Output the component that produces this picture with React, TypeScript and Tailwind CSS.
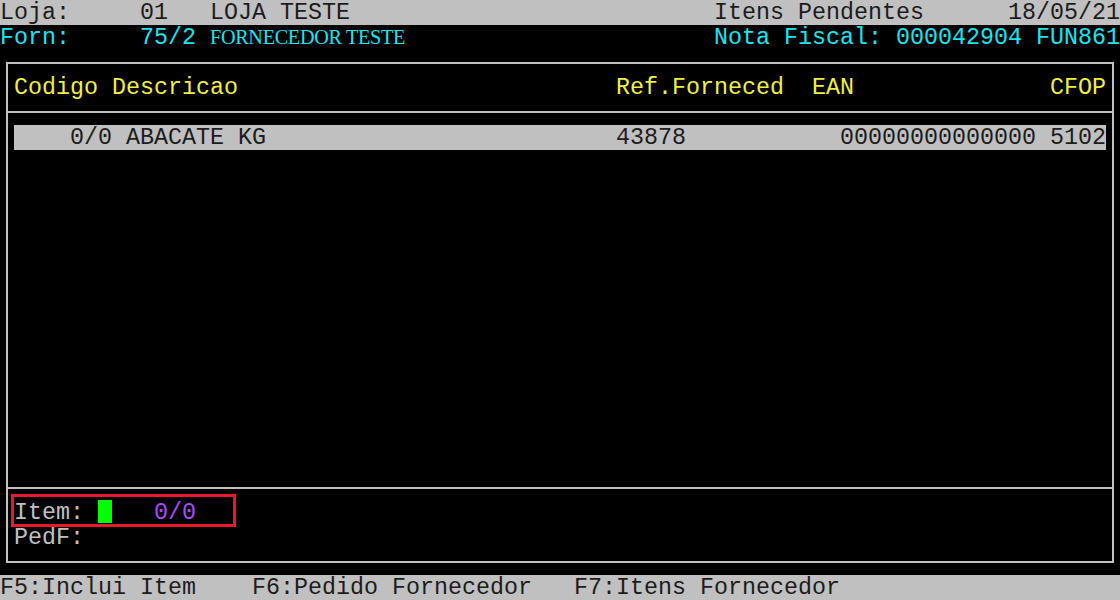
import React from "react";

const mono = "font-['Liberation_Mono','Courier_New',monospace] text-[23.33px] leading-[27px] whitespace-pre";

export default function App() {
  return (
    <div className={`relative w-[1120px] h-[600px] bg-black overflow-hidden ${mono}`}>
      {/* top bar */}
      <div className="flex h-[25px] bg-[#c0c0c0] text-[#1c1c1c]">
        <span>{"Loja:     01   LOJA TESTE"}</span>
        <span className="ml-auto">{"Itens Pendentes      18/05/21"}</span>
      </div>
      <div className="flex h-[25px] text-[#19e6f0]">
        <span>{"Forn:     75/2 "}</span>
        <span className="font-['Liberation_Serif','Times_New_Roman',serif] text-[20.2px] leading-[25px] tracking-[-0.3px]">
          FORNECEDOR TESTE
        </span>
        <span className="ml-auto">{"Nota Fiscal: 000042904 FUN861"}</span>
      </div>

      {/* frame */}
      <div className="mt-[12px] ml-[6px] w-[1108px] h-[501px] border-2 border-[#c0c0c0] flex flex-col">
        <div className="flex pl-[6px] pr-[6px] pt-[11px] h-[49px] border-b-2 border-[#c0c0c0] text-[#f0f040]">
          <span className="h-[25px]">{"Codigo Descricao"}</span>
          <span className="ml-auto h-[25px]">{"Ref.Forneced  EAN              CFOP"}</span>
        </div>
        <div className="h-[376px] border-b-2 border-[#c0c0c0] pt-[12px] pl-[6px] pr-[6px]">
          <div className="flex h-[25px] bg-[#c0c0c0] text-[#1c1c1c]">
            <span>{"    0/0 ABACATE KG"}</span>
            <span className="ml-auto">{"43878           00000000000000 5102"}</span>
          </div>
        </div>
        <div className="pt-[11px] pl-[6px] text-[#c0c0c0]">
          <div className="flex h-[25px] items-start">
            <span>{"Item: "}</span>
            <span className="w-[14px] h-[23px] bg-[#00ff00]" />
            <span className="text-[#a94cff]">{"   0/0"}</span>
          </div>
          <div className="h-[25px]">{"PedF:"}</div>
        </div>
      </div>

      {/* bottom bar */}
      <div className="mt-[12px] h-[25px] bg-[#c0c0c0] text-[#1c1c1c]">
        {"F5:Inclui Item    F6:Pedido Fornecedor   F7:Itens Fornecedor"}
      </div>

      {/* highlight box */}
      <div className="absolute left-[11px] top-[494px] w-[225px] h-[33px] border-[3px] border-[#e8192c]" />
    </div>
  );
}
